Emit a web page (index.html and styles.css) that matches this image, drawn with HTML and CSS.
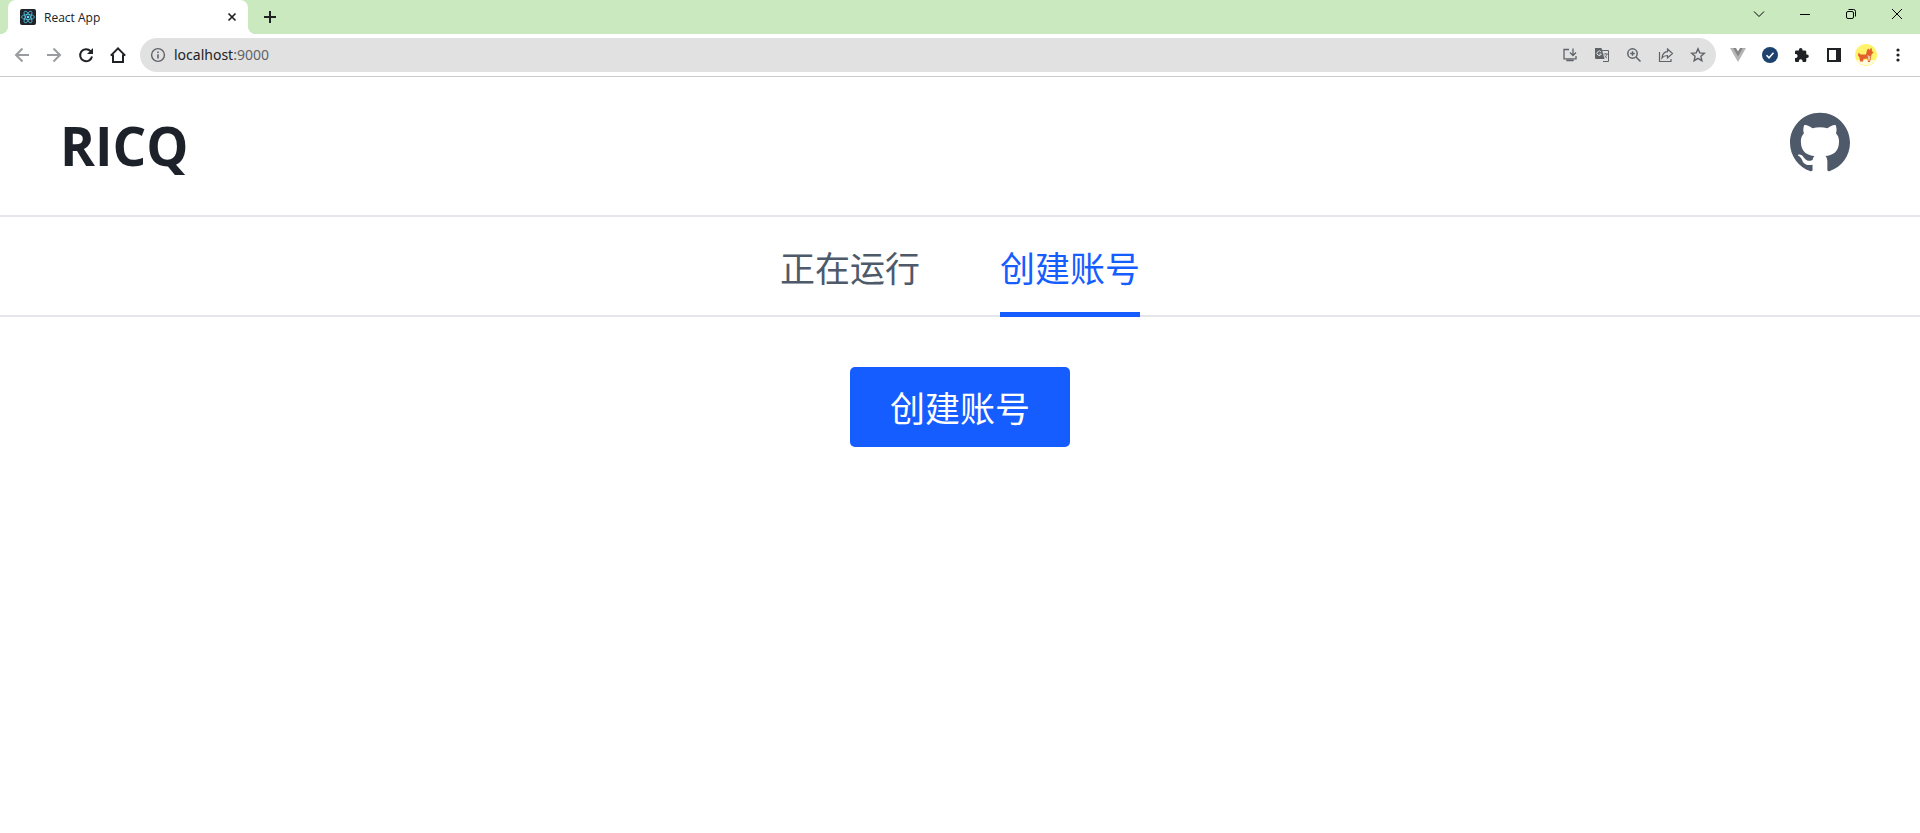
FILE: index.html
```html
<!DOCTYPE html>
<html lang="zh-CN">
<head>
  <meta charset="UTF-8" />
  <meta name="viewport" content="width=device-width, initial-scale=1.0" />
  <title>React App</title>
  <link rel="stylesheet" href="styles.css">
</head>
<body>
  <div class="tab-strip">
    <div class="browser-tab">
      <svg class="favicon" viewBox="0 0 16 16" fill="none" stroke="#53c1de">
        <rect width="16" height="16" rx="2" fill="#20232a" stroke="none" />
        <g stroke-width=".8">
          <ellipse cx="8" cy="8" rx="6.5" ry="2.5" />
          <ellipse cx="8" cy="8" rx="6.5" ry="2.5" transform="rotate(60 8 8)" />
          <ellipse cx="8" cy="8" rx="6.5" ry="2.5" transform="rotate(120 8 8)" />
        </g>
        <circle cx="8" cy="8" r="1.3" fill="#61dafb" stroke="none" />
      </svg>
      <span class="tab-title">React App</span>
      <button class="icon-btn" aria-label="Close tab">
        <svg viewBox="0 0 16 16" fill="none" stroke="#202124" stroke-width="1.7"><path d="M4.5 4.5l7 7M11.5 4.5l-7 7" /></svg>
      </button>
    </div>
    <button class="icon-btn new-tab" aria-label="New tab">
      <svg viewBox="0 0 16 16" fill="none" stroke="#202124" stroke-width="2"><path d="M8 2v12M2 8h12" /></svg>
    </button>
    <div class="window-controls">
      <button aria-label="Search tabs"><svg viewBox="0 0 12 12"><path d="M1 3.5l5 5 5-5" /></svg></button>
      <button aria-label="Minimize"><svg viewBox="0 0 12 12"><path d="M1 6.5h10" /></svg></button>
      <button aria-label="Restore"><svg viewBox="0 0 12 12"><rect x="1.5" y="3.5" width="7" height="7" rx="1.5" /><path d="M3.5 1.5h5a2 2 0 0 1 2 2v5" /></svg></button>
      <button aria-label="Close"><svg viewBox="0 0 12 12"><path d="M1 1l10 10M11 1L1 11" /></svg></button>
    </div>
  </div>

  <div class="toolbar">
    <div class="icon-group">
      <button class="icon-btn muted" aria-label="Back">
        <svg viewBox="0 0 16 16" fill="none" stroke="currentColor" stroke-width="2"><path d="M15 8H2.5M8.500 1.500L2 8l6.500 6.500" /></svg>
      </button>
      <button class="icon-btn muted" aria-label="Forward">
        <svg viewBox="0 0 16 16" fill="none" stroke="currentColor" stroke-width="2"><path d="M1 8h12.500M7.500 1.500L14 8l-6.500 6.500" /></svg>
      </button>
      <button class="icon-btn" aria-label="Reload">
        <svg viewBox="0 0 16 16"><path d="M12.600 4.200A6 6 0 1 0 14 9.500" fill="none" stroke="currentColor" stroke-width="2" /><path d="M15 1v6H9z" fill="currentColor" /></svg>
      </button>
      <button class="icon-btn" aria-label="Home">
        <svg viewBox="0 0 16 16" fill="none" stroke="currentColor" stroke-width="2"><path d="M.8 8.600L8 1.400l7.200 7.200M3 7.500V15h10V7.500" /></svg>
      </button>
    </div>

    <div class="address-bar">
      <svg class="info" viewBox="0 0 16 16"><circle cx="8" cy="8" r="6.400" fill="none" stroke="#5f6368" stroke-width="1.400" /><path d="M7.200 7.200h1.600v4.300H7.200zM7.200 4.500h1.600v1.600H7.200z" fill="#5f6368" /></svg>
      <span class="url">localhost<span class="port">:9000</span></span>
      <div class="icon-group gray">
        <button class="icon-btn" aria-label="Install app">
          <svg viewBox="0 0 16 16" fill="none" stroke="currentColor" stroke-width="1.300"><path d="M7 2.500H2v9.300h12V9M4.500 13.700h7M11 1.500V8M8 5.500l3 3 3-3" /><path d="M4.500 12.500h7v1.500h-7z" fill="currentColor" stroke="none" /></svg>
        </button>
        <button class="icon-btn" aria-label="Translate">
          <svg viewBox="0 0 16 16"><path d="M7.500 3.500h7v11H9" fill="none" stroke="currentColor" /><path d="M1 1h6.500l3 11H2a1 1 0 0 1-1-1z" fill="currentColor" /><path d="M7 5a2.200 2.200 0 1 0 .3 2H5.300" fill="none" stroke="#e1e1e1" /><path d="M9.500 7h4.500M11.700 6v1M13 7c-.5 2-1.300 3-2.300 3.700M10.700 8.500c.5 1 1.300 2 2.300 2.700" fill="none" stroke-width=".8" stroke="currentColor" /></svg>
        </button>
        <button class="icon-btn" aria-label="Zoom">
          <svg viewBox="0 0 16 16" fill="none" stroke="currentColor" stroke-width="1.500"><circle cx="6.500" cy="6.500" r="4.700" /><path d="M10 10l4.500 4.500M4.200 6.500h4.600M6.500 4.200v4.600" /></svg>
        </button>
        <button class="icon-btn" aria-label="Share">
          <svg viewBox="0 0 16 16" fill="none" stroke="currentColor" stroke-width="1.200"><path d="M1.500 5v9.500H13V12M9.500 2l5 4.500-5 4.500V8.500c-2.500 0-4 .5-5.500 2.500.3-3.500 2.200-6 5.500-6.300z" /></svg>
        </button>
        <button class="icon-btn" aria-label="Bookmark">
          <svg viewBox="0 0 16 16" fill="none" stroke="currentColor" stroke-width="1.400"><path d="M8 1.800l1.800 4.100 4.500.4-3.400 3 1 4.400L8 11.400l-3.900 2.300 1-4.400-3.400-3 4.500-.4z" /></svg>
        </button>
      </div>
    </div>

    <div class="icon-group extensions">
      <button class="icon-btn" aria-label="Vue devtools">
        <svg viewBox="0 0 16 16"><path d="M0 1h4l4 7 4-7h4L8 15z" fill="#b5b5b5" /><path d="M3.200 1H6l2 3.500L10 1h2.800L8 9.500z" fill="#858585" /></svg>
      </button>
      <button class="icon-btn" aria-label="Checker">
        <svg viewBox="0 0 16 16"><circle cx="8" cy="8" r="8" fill="#1c426d" /><path d="M4.500 8.300l2.500 2.500 4.500-5" fill="none" stroke="#fff" stroke-width="1.500" /></svg>
      </button>
      <button class="icon-btn" aria-label="Extensions">
        <svg viewBox="0 0 16 16"><path d="M13 7.500h-.7V4.700c0-.7-.6-1.300-1.300-1.300H8.500v-.7a1.800 1.800 0 0 0-3.600 0v.7H2.300C1.600 3.400 1 4 1 4.700v2.400h.7a1.900 1.900 0 0 1 0 3.800H1v2.800c0 .7.600 1.300 1.300 1.300h2.500v-.8a1.900 1.900 0 0 1 3.800 0v.8H11c.7 0 1.300-.6 1.300-1.300v-2.600h.7a1.800 1.800 0 0 0 0-3.600z" fill="currentColor" /></svg>
      </button>
      <button class="icon-btn" aria-label="Side panel">
        <svg viewBox="0 0 16 16"><path d="M1 1h14v14H1zM3 3v10h7V3z" fill="currentColor" fill-rule="evenodd" /></svg>
      </button>
      <button class="icon-btn avatar" aria-label="Profile">
        <svg viewBox="0 0 22 22"><circle cx="11" cy="11" r="11" fill="#fff36b" /><path d="M1.500 16a11 11 0 0 0 19 0z" fill="#fffbe0" /><path d="M3.500 8.500l2 2h5.500l1-4.500 1.500-1.500 1 1.500 2-2.500.5 3.500 1.500 1.500-2 2-.5 3-1 4.500h-2l-.5-3.500-4 .5-.5 2.500H5l-.5-4-1.500-2z" fill="#e2602c" /><path d="M12.500 11l3 1.500-1 4.500h-1z" fill="#e9c9a4" /></svg>
      </button>
      <button class="icon-btn" aria-label="Menu">
        <svg viewBox="0 0 16 16" fill="currentColor"><circle cx="8" cy="3" r="1.600" /><circle cx="8" cy="8" r="1.600" /><circle cx="8" cy="13" r="1.600" /></svg>
      </button>
    </div>
  </div>

  <header>
    <h1>RICQ</h1>
    <a class="github" href="#" aria-label="GitHub">
      <svg viewBox="0 0 24 24" fill="currentColor"><path d="M12 .297c-6.630 0-12 5.373-12 12 0 5.303 3.438 9.800 8.205 11.385.6.113.82-.258.82-.577 0-.285-.01-1.040-.015-2.040-3.338.724-4.042-1.610-4.042-1.610C4.422 18.070 3.633 17.700 3.633 17.700c-1.087-.744.084-.729.084-.729 1.205.084 1.838 1.236 1.838 1.236 1.070 1.835 2.809 1.305 3.495.998.108-.776.417-1.305.76-1.605-2.665-.3-5.466-1.332-5.466-5.930 0-1.310.465-2.380 1.235-3.220-.135-.303-.54-1.523.105-3.176 0 0 1.005-.322 3.300 1.230.96-.267 1.980-.399 3-.405 1.020.006 2.040.138 3 .405 2.280-1.552 3.285-1.230 3.285-1.230.645 1.653.24 2.873.12 3.176.765.840 1.230 1.910 1.230 3.220 0 4.610-2.805 5.625-5.475 5.920.42.360.81 1.096.81 2.220 0 1.606-.015 2.896-.015 3.286 0 .315.210.69.825.57C20.565 22.092 24 17.592 24 12.297c0-6.627-5.373-12-12-12" /></svg>
    </a>
  </header>
  <nav>
    <a href="#">正在运行</a>
    <a class="active" href="#">创建账号</a>
  </nav>
  <main>
    <button class="create-btn">创建账号</button>
  </main>
</body>
</html>
```
FILE: styles.css
```css
:root {
  --primary: #165dff;
  --text: #1d2129;
  --text-light: #4e5969;
  --border: #e5e6eb;
  --strip: #cae9be;
  --chrome: #202124;
}
* { box-sizing: border-box; margin: 0; padding: 0; }
body {
  font-family: 'Open Sans', 'Noto Sans CJK SC', sans-serif;
  background: #fff;
  color: var(--text);
}
button {
  border: none;
  background: none;
  font: inherit;
  cursor: pointer;
}
svg {
  display: block;
}

/* browser tabs */
.tab-strip {
  display: flex;
  height: 34px;
  padding-left: 8px;
  background: var(--strip);
}
.browser-tab {
  position: relative;
  display: flex;
  align-items: center;
  width: 240px;
  padding: 0 8px 0 12px;
  border-radius: 8px 8px 0 0;
  background: #fff;
}
.browser-tab::before,
.browser-tab::after {
  content: "";
  position: absolute;
  bottom: 0;
  width: 8px;
  height: 8px;
}
.browser-tab::before {
  left: -8px;
  background: radial-gradient(circle at 0 0, var(--strip) 8px, #fff 8px);
}
.browser-tab::after {
  right: -8px;
  background: radial-gradient(circle at 100% 0, var(--strip) 8px, #fff 8px);
}
.favicon {
  width: 16px;
  height: 16px;
}
.tab-title {
  flex: 1;
  margin-left: 8px;
  font-size: 12px;
  color: var(--chrome);
}
.icon-btn {
  color: var(--chrome);
}
.icon-btn svg {
  width: 16px;
  height: 16px;
}
.new-tab {
  margin-left: 14px;
}
.window-controls {
  display: flex;
  height: 28px;
  margin-left: auto;
}
.window-controls button {
  display: flex;
  align-items: center;
  justify-content: center;
  width: 46px;
}
.window-controls svg {
  width: 12px;
  height: 12px;
  fill: none;
  stroke: #000;
}

/* toolbar */
.toolbar {
  display: flex;
  align-items: center;
  gap: 14px;
  padding: 4px 14px;
  border-bottom: 1px solid #ccc;
}
.icon-group {
  display: flex;
  align-items: center;
  gap: 16px;
}
.icon-group .muted {
  color: #9a9c9f;
}
.gray .icon-btn {
  color: #5f6368;
}
.address-bar {
  flex: 1;
  display: flex;
  align-items: center;
  height: 34px;
  padding: 0 10px;
  border-radius: 17px;
  background: #e1e1e1;
}
.info {
  width: 16px;
  height: 16px;
}
.url {
  flex: 1;
  margin-left: 8px;
  padding-bottom: 2px;
  font-family: 'Noto Sans', sans-serif;
  font-size: 14px;
  color: var(--chrome);
}
.port {
  color: #5f6368;
}
.avatar {
  margin: 0 -3px;
}
.avatar svg {
  width: 22px;
  height: 22px;
}

/* page */
header {
  display: flex;
  justify-content: space-between;
  padding: 30px 70px 30px 60px;
  border-bottom: 2px solid var(--border);
}
header h1 {
  font-size: 53px;
  line-height: 78px;
  font-weight: 700;
}
.github {
  margin-top: 5px;
  color: var(--text-light);
}
.github svg {
  width: 60px;
  height: 60px;
}
nav {
  display: flex;
  justify-content: center;
  gap: 80px;
  border-bottom: 2px solid var(--border);
}
nav a {
  margin-bottom: -2px;
  padding: 27px 0 18px;
  border-bottom: 5px solid transparent;
  font-size: 35px;
  line-height: 50px;
  color: var(--text-light);
  text-decoration: none;
}
nav .active {
  color: var(--primary);
  border-bottom-color: var(--primary);
}
main {
  display: flex;
  justify-content: center;
  padding: 50px;
}
.create-btn {
  padding: 4px 40px 0;
  border-radius: 5px;
  background: var(--primary);
  color: #fff;
  font-size: 35px;
  line-height: 76px;
}
```
